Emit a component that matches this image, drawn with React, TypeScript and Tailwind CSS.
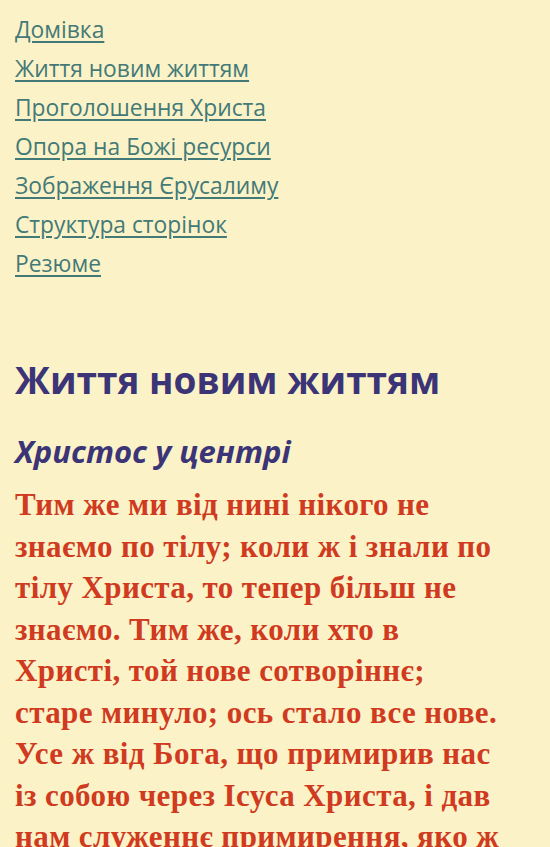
const links = [
  "Домівка",
  "Життя новим життям",
  "Проголошення Христа",
  "Опора на Божі ресурси",
  "Зображення Єрусалиму",
  "Структура сторінок",
  "Резюме",
];

const verse = [
  "Тим же ми від нині нікого не",
  "знаємо по тілу; коли ж і знали по",
  "тілу Христа, то тепер більш не",
  "знаємо. Тим же, коли хто в",
  "Христі, той нове сотворіннє;",
  "старе минуло; ось стало все нове.",
  "Усе ж від Бога, що примирив нас",
  "із собою через Ісуса Христа, і дав",
  "нам служеннє примирення, яко ж",
  "Бог був у Христї, примиряючи з",
  "собою сьвіт, не полічуючи їм",
];

const App = () => {
  return (
    <div className="min-h-screen bg-[#fcf2c7] px-[15px] overflow-hidden">
      <nav className="pt-[10px]">
        <ul className="flex flex-col">
          {links.map((l, i) => (
            <li key={i} className="h-[39px] leading-[39px]">
              <a
                href="#"
                className="text-[22.8px] text-[#437a78] underline underline-offset-[3px] font-['Open_Sans',sans-serif]"
              >
                {l}
              </a>
            </li>
          ))}
        </ul>
      </nav>

      <h1 className="mt-[73px] text-[37px] leading-[48px] font-bold text-[#3b3577] font-['Open_Sans',sans-serif]">
        Життя новим життям
      </h1>
      <h2 className="mt-[27px] text-[31px] leading-[40px] font-bold italic text-[#3b3577] font-['Open_Sans',sans-serif]">
        Христос у центрі
      </h2>
      <p className="mt-[13px] text-[31px] leading-[41.5px] tracking-[0.4px] font-bold text-[#cf3a20] font-['Liberation_Serif',serif]">
        {verse.map((line, i) => (
          <span key={i} className="block whitespace-nowrap">
            {line}
          </span>
        ))}
      </p>
    </div>
  );
};

export default App;
